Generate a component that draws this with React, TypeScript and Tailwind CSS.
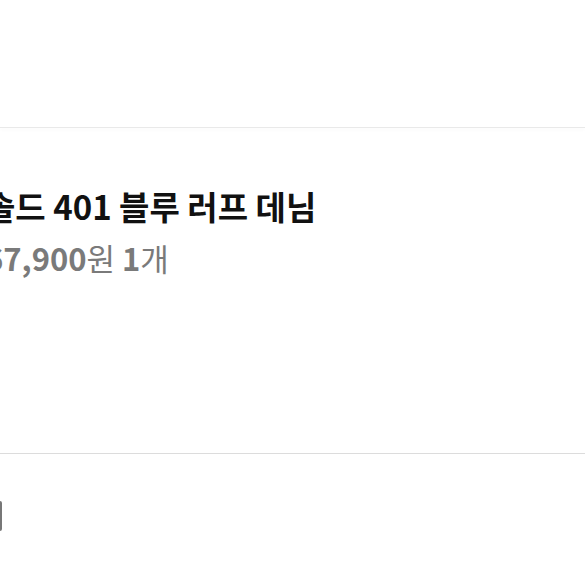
import React from 'react';

const FONT = { fontFamily: '"Noto Sans CJK KR", "Noto Sans", sans-serif' };

function OrderItem() {
  return (
    <div className="overflow-hidden pt-[58px] h-[325px]">
      <div className="ml-[-15px]">
        <p className="text-[33px] font-bold leading-[40px] text-[#111] whitespace-nowrap">
          솔드 401 블루 러프 데님
        </p>
        <p className="mt-[14px] text-[31px] leading-[36px] text-[#7a7a7a] whitespace-nowrap">
          <span className="font-bold">67,900</span>원 <span className="font-bold">1</span>개
        </p>
      </div>
    </div>
  );
}

export default function App() {
  return (
    <div className="w-[585px] h-[585px] bg-white overflow-hidden" style={FONT}>
      <div className="h-[127px]" />
      <div className="h-[1px] bg-[#e9e9e9] shadow-[0_2px_3px_rgba(0,0,0,0.04)]" />
      <OrderItem />
      <div className="h-[1px] bg-[#dcdcdc]" />
      <div className="overflow-hidden pt-[47px]">
        <div className="ml-[-28px] w-[30px] h-[30px] border-2 border-[#777] rounded-[2px]" />
      </div>
    </div>
  );
}
